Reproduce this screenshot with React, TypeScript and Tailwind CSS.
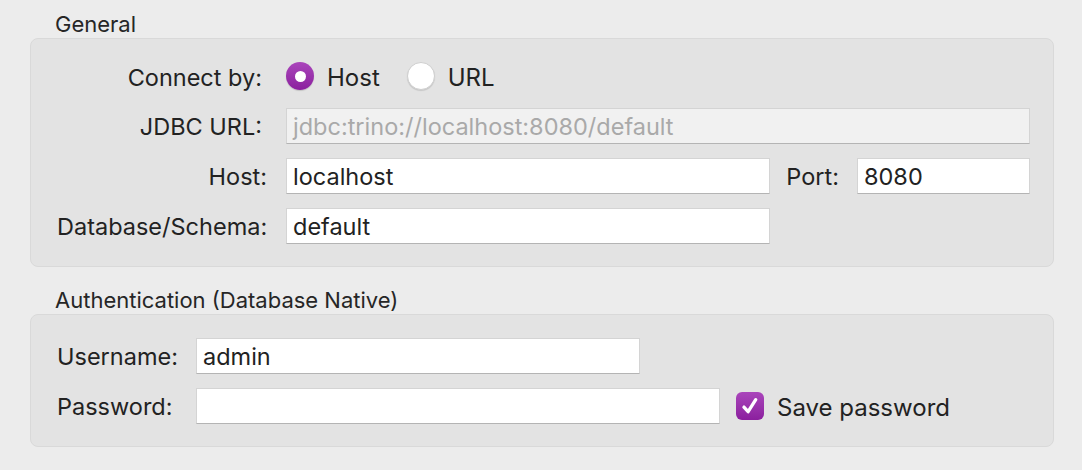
import { useState } from "react"

function Field({ value, className = "", disabled = false }: { value: string; className?: string; disabled?: boolean }) {
  return (
    <div
      className={`flex h-9 items-center border border-[#d4d4d4] border-b-[#b4b4b4] px-[6px] pt-[2px] text-[23.5px] leading-none ${
        disabled ? "bg-[#f1f1f1] text-[#a9a9a9]" : "bg-white text-[#222]"
      } ${className}`}
    >
      <span className="whitespace-nowrap">{value}</span>
    </div>
  )
}

function Radio({ checked, label, onClick }: { checked: boolean; label: string; onClick: () => void }) {
  return (
    <button onClick={onClick} className="flex items-center gap-[13px]">
      {checked ? (
        <span className="flex h-7 w-7 items-center justify-center rounded-full bg-gradient-to-b from-[#aa45bb] to-[#8b1f9e] shadow-[0_1px_1px_rgba(0,0,0,0.15)]">
          <span className="h-[11px] w-[11px] rounded-full bg-white" />
        </span>
      ) : (
        <span className="h-7 w-7 rounded-full border border-[#cfcfcf] bg-white shadow-[0_1px_1px_rgba(0,0,0,0.12)]" />
      )}
      <span className="pt-[3px] text-[24px] leading-[30px] text-[#222]">{label}</span>
    </button>
  )
}

function SectionTitle({ label }: { label: string }) {
  return <p className="mb-[3px] pl-[55px] text-[22px] leading-[22px] text-[#262626]">{label}</p>
}

export default function App() {
  const [mode, setMode] = useState<"host" | "url">("host")
  const [save, setSave] = useState(true)

  return (
    <div className="h-[470px] w-[1082px] bg-[#ececec] pt-[13px] font-['Inter',sans-serif] text-[#222]">
      <SectionTitle label="General" />
      <section className="mr-[28px] ml-[30px] rounded-[8px] border border-[#d9d9d9] bg-[#e3e3e3] pt-[19px] pr-[23px] pb-[22px] pl-[26px]">
        <div className="grid grid-cols-[210px_1fr] items-center gap-x-[19px] gap-y-[14px] text-[23.5px] leading-[30px]">
          <span className="pt-[3px] pr-[5px] text-right">Connect by:</span>
          <div className="flex h-9 items-center gap-[27px]">
            <Radio checked={mode === "host"} label="Host" onClick={() => setMode("host")} />
            <Radio checked={mode === "url"} label="URL" onClick={() => setMode("url")} />
          </div>

          <span className="pt-[2px] pr-[5px] text-right">JDBC URL:</span>
          <Field value="jdbc:trino://localhost:8080/default" disabled />

          <span className="pt-[2px] text-right">Host:</span>
          <div className="flex items-center">
            <Field value="localhost" className="flex-1" />
            <span className="ml-[16px] mr-[18px] pt-[2px]">Port:</span>
            <Field value="8080" className="w-[173px]" />
          </div>

          <span className="whitespace-nowrap pt-[2px] text-right">Database/Schema:</span>
          <Field value="default" className="w-[484px]" />
        </div>
      </section>

      <div className="mt-[22px]">
        <SectionTitle label="Authentication (Database Native)" />
      </div>
      <section className="mr-[28px] ml-[30px] rounded-[8px] border border-[#d9d9d9] bg-[#e3e3e3] pt-[23px] pr-[23px] pb-[22px] pl-[26px]">
        <div className="grid grid-cols-[139px_1fr] items-center gap-y-[14px] text-[23.5px] leading-[30px]">
          <span className="pt-[2px]">Username:</span>
          <Field value="admin" className="w-[444px]" />

          <span className="pt-[2px]">Password:</span>
          <div className="flex items-center">
            <Field value="" className="w-[524px]" />
            <button onClick={() => setSave(!save)} className="ml-[16px] flex items-center gap-[13px]">
              <span
                className={`flex h-7 w-7 items-center justify-center rounded-[6px] ${
                  save
                    ? "bg-gradient-to-b from-[#aa45bb] to-[#8b1f9e]"
                    : "border border-[#cfcfcf] bg-white"
                }`}
              >
                {save && (
                  <svg viewBox="0 0 20 20" className="h-[22px] w-[22px]">
                    <path d="M4.5 11 L8.3 15.2 L15.2 4.2" fill="none" stroke="white" strokeWidth="3" strokeLinecap="round" strokeLinejoin="round" />
                  </svg>
                )}
              </span>
              <span className="pt-[3px] text-[24px] leading-[30px]">Save password</span>
            </button>
          </div>
        </div>
      </section>
    </div>
  )
}
